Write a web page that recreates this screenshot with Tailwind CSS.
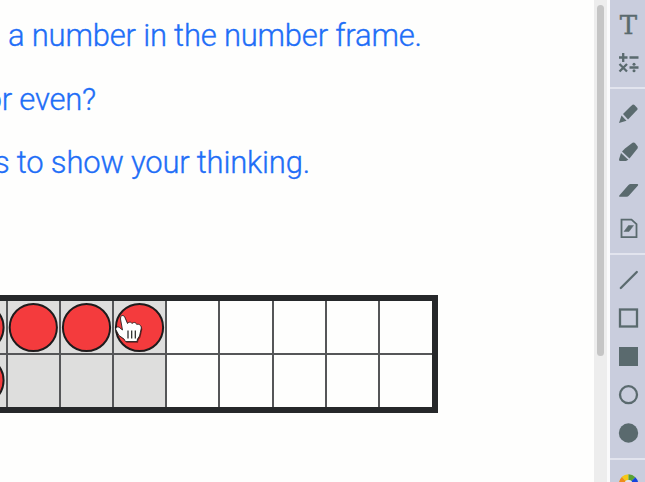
<!DOCTYPE html>
<html lang="en">
<head>
<meta charset="utf-8">
<title>Number frame</title>
<script src="https://cdn.jsdelivr.net/npm/@tailwindcss/browser@4"></script>
</head>
<body class="w-[645px] h-[482px] overflow-hidden flex bg-[#fefefd]">
<main class="relative w-[594px] h-full overflow-hidden shrink-0">
  <div class="font-['Roboto',sans-serif] font-light text-[31px] tracking-[-0.2px] leading-[63.5px] text-[#1f6ef7] [-webkit-text-stroke:0.35px_#1f6ef7] whitespace-nowrap pt-[4px]">
    <p class="ml-[8px]"><span>a number in the number frame.</span></p>
    <p class="-ml-[15.5px]"><span>or even?</span></p>
    <p class="-ml-[6px]"><span>s to show your thinking.</span></p>
  </div>
  <div class="-ml-[52px] mt-[100px] w-[490px] h-[118px] bg-[#26282a] border-[6px] border-[#26282a] grid grid-cols-[52px_53px_53px_53px_53px_54px_53px_53px_54px] grid-rows-2">
    <div class="bg-[#dededd] border-b border-[#555658]"></div>
    <div class="bg-[#dededd] border-l-2 border-b border-[#555658]"></div>
    <div class="bg-[#dededd] border-l-2 border-b border-[#555658]"></div>
    <div class="bg-[#dededd] border-l-2 border-b border-[#555658]"></div>
    <div class="bg-[#fefefd] border-l-2 border-b border-[#555658]"></div>
    <div class="bg-[#fefefd] border-l-2 border-b border-[#555658]"></div>
    <div class="bg-[#fefefd] border-l-2 border-b border-[#555658]"></div>
    <div class="bg-[#fefefd] border-l-2 border-b border-[#555658]"></div>
    <div class="bg-[#fefefd] border-l-2 border-b border-[#555658]"></div>
    <div class="bg-[#dededd] border-t border-[#555658]"></div>
    <div class="bg-[#dededd] border-l-2 border-t border-[#555658]"></div>
    <div class="bg-[#dededd] border-l-2 border-t border-[#555658]"></div>
    <div class="bg-[#dededd] border-l-2 border-t border-[#555658]"></div>
    <div class="bg-[#fefefd] border-l-2 border-t border-[#555658]"></div>
    <div class="bg-[#fefefd] border-l-2 border-t border-[#555658]"></div>
    <div class="bg-[#fefefd] border-l-2 border-t border-[#555658]"></div>
    <div class="bg-[#fefefd] border-l-2 border-t border-[#555658]"></div>
    <div class="bg-[#fefefd] border-l-2 border-t border-[#555658]"></div>
  </div>
  <!-- counters and hand pointer lying over the frame -->
  <svg class="absolute left-0 top-[295px]" width="180" height="118" viewBox="0 295 180 118">
    <g fill="#f43b3d" stroke="#1e1b1c" stroke-width="2">
      <circle cx="-20" cy="327.500" r="23.600"/>
      <circle cx="33.300" cy="327.500" r="23.600"/>
      <circle cx="86.500" cy="327.500" r="23.600"/>
      <circle cx="139.500" cy="327.500" r="23.600"/>
      <circle cx="-20" cy="380.500" r="23.600"/>
    </g>
    <path transform="translate(1 1.2)" fill="#000" opacity=".5" d="M120.800 316.500C122 315 124 315.200 124.700 317L127.500 323.500C129 321.500 131.500 322 132 323.500C134 321.700 136 322.500 136.800 324.500C139 323.500 141.300 325.500 141.300 328L139.500 336L137.500 339L137 341.500L125.500 341.500L124 339L119 335.500L115.800 329.500C115.500 327 118 326 120 328L122.500 330L120.500 319Z"/>
    <path fill="#fff" stroke="#151515" stroke-width=".8" stroke-linejoin="round" d="M120.800 316.500C122 315 124 315.200 124.700 317L127.500 323.500C129 321.500 131.500 322 132 323.500C134 321.700 136 322.500 136.800 324.500C139 323.500 141.300 325.500 141.300 328L139.500 336L137.500 339L137 341.500L125.500 341.500L124 339L119 335.500L115.800 329.500C115.500 327 118 326 120 328L122.500 330L120.500 319Z"/>
    <path stroke="#222" stroke-width="1.200" d="M128 330.500v8M131.700 330.500v8M135.300 330.500v8"/>
  </svg>
</main>
<div class="w-[13px] h-full shrink-0 bg-[#ededed] pl-[3px] pt-[5px]">
  <div class="w-[7px] h-[351px] rounded-full bg-[#c5c5c5]"></div>
</div>
<aside class="w-[38px] h-full shrink-0 bg-[#c9cddd] border-l-[3px] border-[#fafafb] text-[#5a6a6e]">
  <div class="h-[89px] border-b-2 border-[#e2e4ee]">
    <div class="h-[49px] flex items-center justify-center pl-[2px]"><span class="font-['DejaVu_Serif',serif] text-[26px] leading-none [-webkit-text-stroke:0.4px_#5a6a6e]">T</span></div>
    <svg class="ml-[8px] -mt-px" width="22" height="30" viewBox="618 48 22 30" fill="none" stroke="currentColor" stroke-width="2.300"><path d="M619 57.500h8.500M623.200 53v9M629.500 57.500h9M619.500 64l7.500 7.500M627 64l-7.500 7.500M629.500 67.500h9"/><circle cx="634" cy="64.200" r="1.500" fill="currentColor" stroke="none"/><circle cx="634" cy="70.800" r="1.500" fill="currentColor" stroke="none"/></svg>
  </div>
  <div class="h-[166px] border-b-2 border-[#e2e4ee]">
    <svg class="ml-[8px]" width="22" height="160" viewBox="618 89 22 160" fill="currentColor">
      <path d="M630 107L632.500 104.700Q633.500 104 634.500 105L637.300 108Q638 109 637.300 109.800L628 119.500L623 114Z"/><path d="M621.500 115.500L626.500 120.700L619 123Z"/>
      <path d="M625 148.500L632.500 142.700Q634 142 635 143L637.700 146.500Q638 147.500 637.500 148.500L629.500 158.500L622 151.500Z"/><path d="M621 153L628.300 159.700L626 161H619.500L619 159.500Z"/>
      <path d="M630.500 184H637.500Q638.500 184 638 185.500L629 195.500Q628 196.700 626.500 196.700H619.500Q618.700 196.500 619.300 195.500L628.500 185Q629.500 184 630.500 184Z"/>
      <path fill="none" stroke="currentColor" stroke-width="1.800" d="M621.500 219.700h10l5 4.500v13h-15z"/><path d="M628.500 225.500h5l-4.500 6h-5z" stroke="currentColor" stroke-width=".5"/>
    </svg>
  </div>
  <div class="h-[205px] border-b-2 border-[#e2e4ee]">
    <svg class="ml-[8px]" width="22" height="203" viewBox="618 255 22 203" fill="none" stroke="currentColor" stroke-width="2.300">
      <path d="M620.800 288L636.800 272" stroke-linecap="round"/>
      <rect x="620" y="309.500" width="17" height="17"/>
      <rect x="619" y="347" width="19" height="19" fill="currentColor" stroke="none"/>
      <circle cx="628.500" cy="394.700" r="8.500"/>
      <circle cx="628.500" cy="433" r="9.700" fill="currentColor" stroke="none"/>
    </svg>
  </div>
  <svg class="ml-[8px]" width="22" height="22" viewBox="618 460 22 22"><g fill="none" stroke-width="5.800">
    <path stroke="#ee8c1c" d="M621.800 484A6.800 6.800 0 0 1 624 478.800"/>
    <path stroke="#f5c915" d="M623.800 479A6.800 6.800 0 0 1 628.500 477.200"/>
    <path stroke="#59a233" d="M628.500 477.200A6.800 6.800 0 0 1 633.300 479.200"/>
    <path stroke="#1644dc" d="M633.300 479.200A6.800 6.800 0 0 1 635.300 484"/>
  </g><circle cx="628.500" cy="484" r="4" fill="#e4e5ed"/></svg>
</aside>
</body>
</html>
